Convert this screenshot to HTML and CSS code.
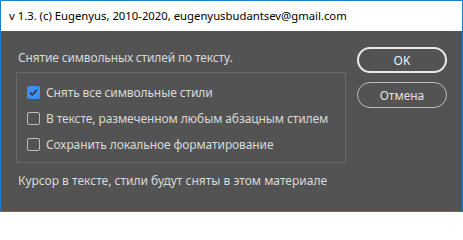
FILE: index.html
```html
<!DOCTYPE html>
<html lang="ru">
<head>
<meta charset="utf-8">
<link rel="stylesheet" href="styles.css">
</head>
<body>
<div class="window">
  <div class="titlebar">v 1.3. (c) Eugenyus, 2010-2020, eugenyusbudantsev@gmail.com</div>
  <div class="content">
    <div class="main">
      <div class="heading">Снятие символьных стилей по тексту.</div>
      <div class="panel">
        <label class="row">
          <span class="box checked"><svg width="13" height="13" viewBox="0 0 13 13"><path d="M3.2 6.6 L5.4 8.8 L9.8 4.2" fill="none" stroke="#2c3b4e" stroke-width="1.7"/></svg></span>
          <span class="label">Снять все символьные стили</span>
        </label>
        <label class="row">
          <span class="box"></span>
          <span class="label">В тексте, размеченном любым абзацным стилем</span>
        </label>
        <label class="row">
          <span class="box"></span>
          <span class="label">Сохранить локальное форматирование</span>
        </label>
      </div>
      <div class="status">Курсор в тексте, стили будут сняты в этом материале</div>
    </div>
    <div class="buttons">
      <div class="btn ok">OK</div>
      <div class="btn cancel">Отмена</div>
    </div>
  </div>
</div>
</body>
</html>
```

FILE: styles.css
```css
html, body {
  margin: 0;
  padding: 0;
}
body {
  width: 463px;
  height: 212px;
  overflow: hidden;
  font-family: "Noto Sans", "Open Sans", sans-serif;
}
.window {
  box-sizing: border-box;
  width: 463px;
  height: 212px;
  border: 1px solid #1a7fd8;
  background: #535353;
  display: flex;
  flex-direction: column;
}
.titlebar {
  height: 30px;
  background: #ffffff;
  color: #000000;
  font-size: 11.3px;
  line-height: 30px;
  padding-left: 8px;
  white-space: nowrap;
}
.content {
  display: flex;
  padding: 0 15px 0 15px;
  gap: 11px;
  color: #d9d9d9;
  font-size: 12px;
}
.main {
  width: 330px;
  display: flex;
  flex-direction: column;
}
.heading {
  margin-top: 19px;
  line-height: 16px;
  padding-left: 2px;
  white-space: nowrap;
  letter-spacing: -0.15px;
}
.panel {
  margin-top: 6px;
  border: 1px solid #696969;
  padding: 6px 10px 5px 10px;
  display: flex;
  flex-direction: column;
}
.row {
  height: 26px;
  display: flex;
  align-items: center;
  gap: 6px;
  white-space: nowrap;
}
.label {
  letter-spacing: -0.1px;
}
.box {
  box-sizing: border-box;
  width: 13px;
  height: 13px;
  border: 1px solid #bdbdbd;
  border-radius: 2px;
  display: flex;
  align-items: center;
  justify-content: center;
  flex: none;
}
.box.checked {
  border: none;
  background: #3d8ff0;
}
.status {
  margin-top: 10px;
  line-height: 16px;
  padding-left: 2px;
  white-space: nowrap;
}
.buttons {
  width: 90px;
  display: flex;
  flex-direction: column;
  gap: 9px;
  padding-top: 16px;
}
.btn {
  box-sizing: border-box;
  height: 26px;
  border-radius: 13px;
  display: flex;
  align-items: center;
  justify-content: center;
  font-size: 12px;
}
.btn.ok {
  border: 2px solid #e8e8e8;
  color: #f2f2f2;
}
.btn.cancel {
  border: 1px solid #bcbcbc;
  color: #e0e0e0;
}
```
